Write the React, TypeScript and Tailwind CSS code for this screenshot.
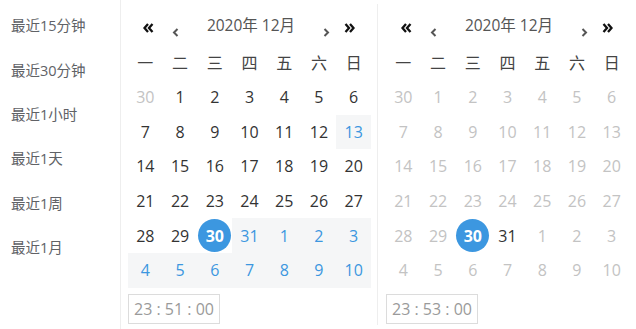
import React from "react";

const FONT = { fontFamily: '"Open Sans", "Noto Sans CJK SC", sans-serif' };

const DoubleLeft = () => (
  <svg width="11" height="10" viewBox="0 0 11 10" className="block">
    <path d="M5 1 L1.5 5 L5 9 M9.5 1 L6 5 L9.5 9" fill="none" stroke="#111" strokeWidth="2.3" strokeLinejoin="miter" />
  </svg>
);
const DoubleRight = () => (
  <svg width="11" height="10" viewBox="0 0 11 10" className="block">
    <path d="M1.5 1 L5 5 L1.5 9 M6 1 L9.5 5 L6 9" fill="none" stroke="#111" strokeWidth="2.3" strokeLinejoin="miter" />
  </svg>
);
const SingleLeft = () => (
  <svg width="7" height="9" viewBox="0 0 7 9" className="block">
    <path d="M5.5 1 L2 4.5 L5.5 8" fill="none" stroke="#555" strokeWidth="2" />
  </svg>
);
const SingleRight = () => (
  <svg width="7" height="9" viewBox="0 0 7 9" className="block">
    <path d="M1.5 1 L5 4.5 L1.5 8" fill="none" stroke="#555" strokeWidth="2" />
  </svg>
);

type Cell = { d: number; kind: "prev" | "cur" | "range" | "sel" | "dis" | "next" };

const weekdays = ["一", "二", "三", "四", "五", "六", "日"];

function buildLeft(): Cell[] {
  const cells: Cell[] = [{ d: 30, kind: "prev" }];
  for (let i = 1; i <= 31; i++) {
    let kind: Cell["kind"] = "cur";
    if (i === 13 || i === 31) kind = "range";
    if (i === 30) kind = "sel";
    cells.push({ d: i, kind });
  }
  for (let i = 1; i <= 10; i++) cells.push({ d: i, kind: "range" });
  return cells;
}

function buildRight(): Cell[] {
  const cells: Cell[] = [{ d: 30, kind: "dis" }];
  for (let i = 1; i <= 31; i++) {
    let kind: Cell["kind"] = "dis";
    if (i === 30) kind = "sel";
    if (i === 31) kind = "cur";
    cells.push({ d: i, kind });
  }
  for (let i = 1; i <= 10; i++) cells.push({ d: i, kind: "dis" });
  return cells;
}

function DayCell({ c }: { c: Cell }) {
  if (c.kind === "sel") {
    return (
      <div className="h-[34.6px] flex items-center justify-center">
        <div className="w-[33px] h-[33px] rounded-full bg-[#3c97e0] text-white font-bold text-[16px] flex items-center justify-center">
          {c.d}
        </div>
      </div>
    );
  }
  const cls =
    c.kind === "range"
      ? "bg-[#f5f6f7] text-[#3c97e0]"
      : c.kind === "cur"
      ? "text-[#333]"
      : "text-[#c3c3c3]";
  return (
    <div className={`h-[34.6px] flex items-center justify-center text-[16px] ${cls}`}>{c.d}</div>
  );
}

function Calendar({ cells, time }: { cells: Cell[]; time: string }) {
  return (
    <div className="flex flex-col w-[243px]">
      <div className="h-[46px] flex items-start">
        <div className="ml-[15px] mt-[23px]">
          <DoubleLeft />
        </div>
        <div className="ml-[18px] mt-[28px]">
          <SingleLeft />
        </div>
        <div className="flex-1 text-center text-[15.5px] leading-[22px] mt-[14px] text-[#555]">2020年 12月</div>
        <div className="mt-[28px]">
          <SingleRight />
        </div>
        <div className="ml-[14px] mr-[16px] mt-[23px]">
          <DoubleRight />
        </div>
      </div>
      <div className="grid grid-cols-7 h-[34px]">
        {weekdays.map((w) => (
          <div key={w} className="flex items-center justify-center text-[16px] text-[#444]">
            {w}
          </div>
        ))}
      </div>
      <div className="grid grid-cols-7">
        {cells.map((c, i) => (
          <DayCell key={i} c={c} />
        ))}
      </div>
      <div className="mt-[6px] w-[92px] h-[30px] border border-[#dcdcdc] flex items-center justify-center text-[16px] text-[#9a9a9a]">
        {time}
      </div>
    </div>
  );
}

export default function App() {
  const items = ["最近15分钟", "最近30分钟", "最近1小时", "最近1天", "最近1周", "最近1月"];
  return (
    <div className="w-[636px] h-[329px] bg-white flex overflow-hidden" style={FONT}>
      <div className="w-[121px] h-full border-r border-[#eeeeee] pt-[4px]">
        {items.map((t) => (
          <div key={t} className="h-[44.4px] flex items-center pl-[11px] text-[14.5px] text-[#606266]">
            {t}
          </div>
        ))}
      </div>
      <div className="w-[256px] pl-[7px]">
        <Calendar cells={buildLeft()} time="23 : 51 : 00" />
      </div>
      <div className="my-[4px] w-px bg-[#eeeeee]" />
      <div className="pl-[8px]">
        <Calendar cells={buildRight()} time="23 : 53 : 00" />
      </div>
    </div>
  );
}
